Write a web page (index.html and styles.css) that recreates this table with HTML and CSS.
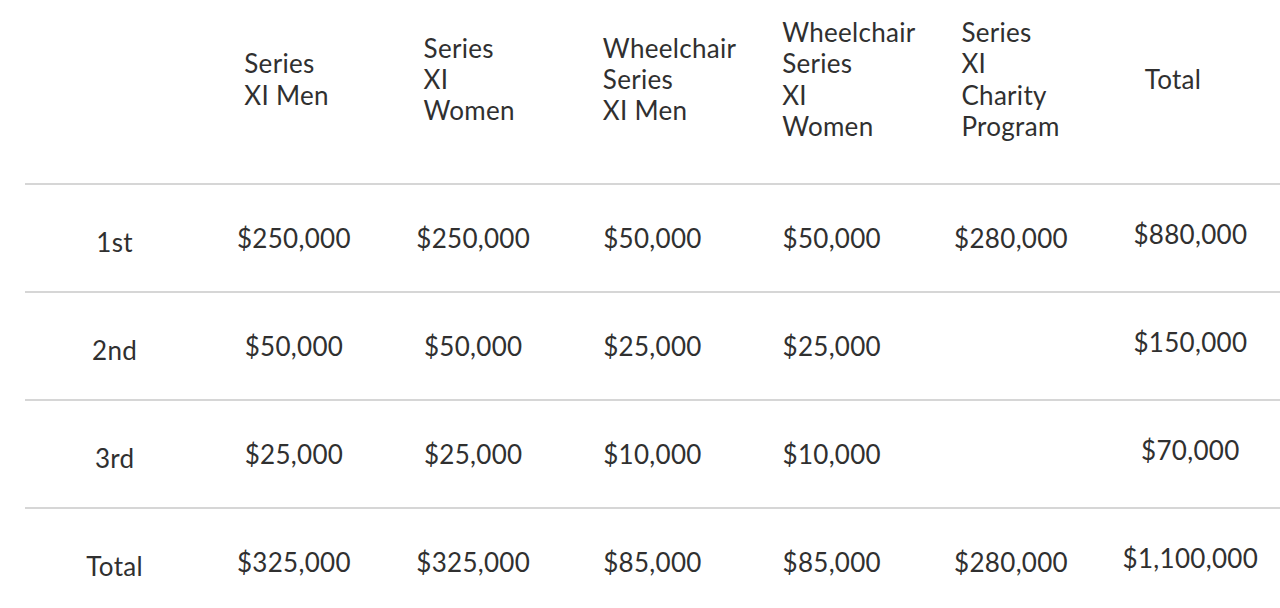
FILE: index.html
```html
<!DOCTYPE html>
<html lang="en">
<head>
<meta charset="utf-8">
<title>Prize money</title>
<link rel="stylesheet" href="styles.css">
</head>
<body>
<table class="prizes">
  <thead>
    <tr>
      <th class="corner"></th>
      <th>Series XI Men</th>
      <th>Series XI Women</th>
      <th>Wheelchair Series XI Men</th>
      <th>Wheelchair Series XI Women</th>
      <th>Series XI Charity Program</th>
      <th class="tot-head">Total</th>
    </tr>
  </thead>
  <tbody>
    <tr>
      <td class="label">1st</td>
      <td>$250,000</td>
      <td>$250,000</td>
      <td>$50,000</td>
      <td>$50,000</td>
      <td>$280,000</td>
      <td class="total">$880,000</td>
    </tr>
    <tr>
      <td class="label">2nd</td>
      <td>$50,000</td>
      <td>$50,000</td>
      <td>$25,000</td>
      <td>$25,000</td>
      <td></td>
      <td class="total">$150,000</td>
    </tr>
    <tr>
      <td class="label">3rd</td>
      <td>$25,000</td>
      <td>$25,000</td>
      <td>$10,000</td>
      <td>$10,000</td>
      <td></td>
      <td class="total">$70,000</td>
    </tr>
    <tr>
      <td class="label">Total</td>
      <td>$325,000</td>
      <td>$325,000</td>
      <td>$85,000</td>
      <td>$85,000</td>
      <td>$280,000</td>
      <td class="total">$1,100,000</td>
    </tr>
  </tbody>
</table>
</body>
</html>
```
FILE: styles.css
```css
html, body {
  margin: 0;
  padding: 0;
  background: #ffffff;
}

body {
  padding-left: 25px;
  font-family: "Lato", "Liberation Sans", sans-serif;
  color: #303030;
  overflow: hidden;
}

.prizes {
  width: 1255px;
  border-collapse: collapse;
  table-layout: fixed;
  font-size: 26px;
  letter-spacing: 0.3px;
}

.prizes th {
  font-weight: 400;
  text-align: left;
  vertical-align: middle;
  line-height: 31.3px;
  padding: 16px 49px 40px 40px;
  height: 127px;
  border-bottom: 2px solid #d6d6d6;
}

.prizes th.tot-head {
  padding-left: 44px;
  padding-right: 20px;
}

.prizes td {
  text-align: center;
  vertical-align: middle;
  height: 106px;
  padding: 0;
  border-bottom: 2px solid #d6d6d6;
  white-space: nowrap;
}

.prizes tbody tr:last-child td {
  border-bottom: none;
}

.prizes td.label {
  height: 99px;
  padding-top: 7px;
}

.prizes td.total {
  height: 98px;
  padding-bottom: 8px;
}
```
